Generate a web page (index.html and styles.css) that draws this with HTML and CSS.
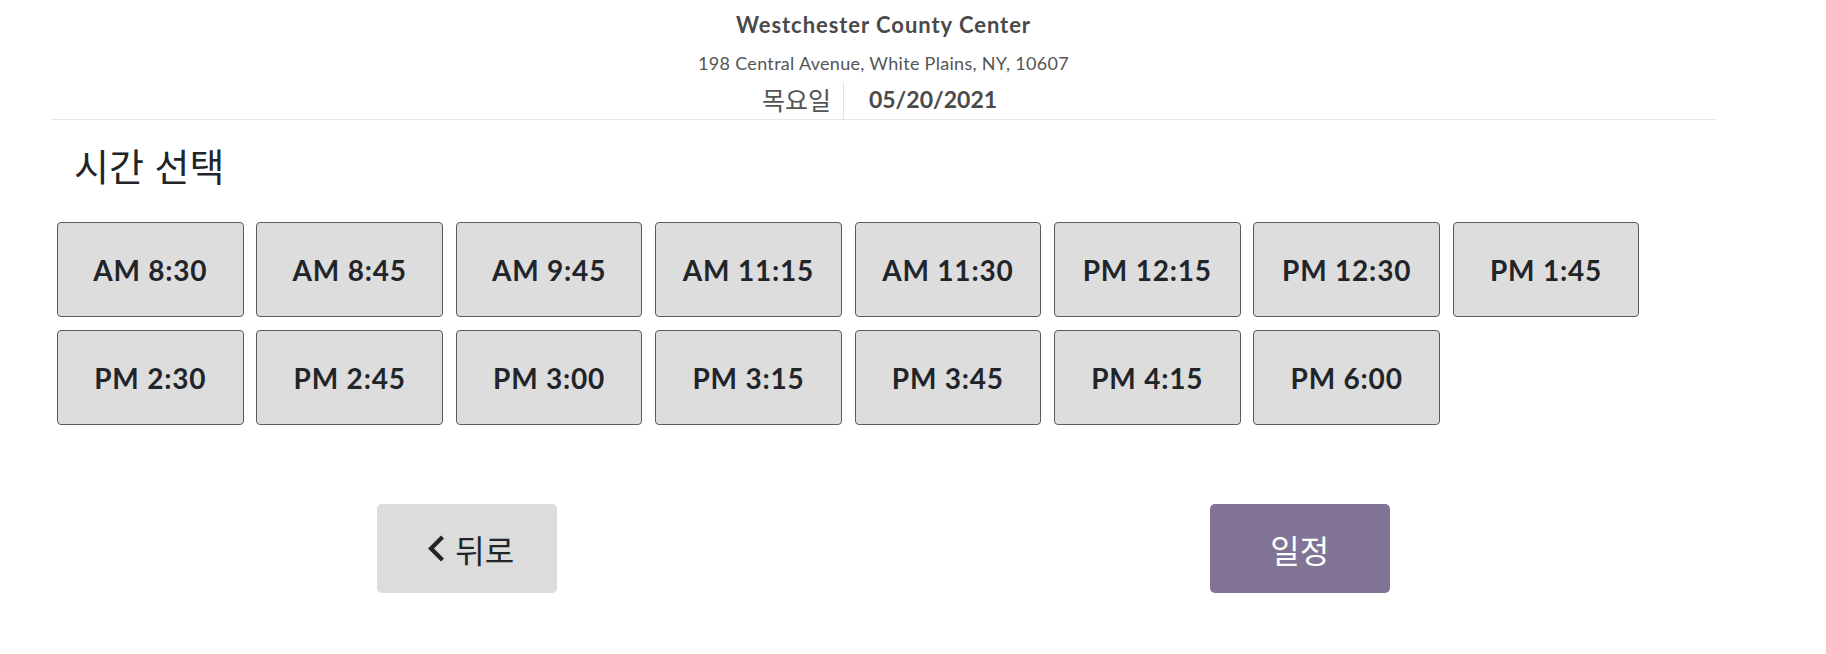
FILE: index.html
```html
<!DOCTYPE html>
<html lang="ko">
<head>
<meta charset="utf-8">
<title>시간 선택</title>
<link rel="stylesheet" href="styles.css">
</head>
<body>
<div class="page">
  <header class="header">
    <div class="venue">Westchester County Center</div>
    <div class="address">198 Central Avenue, White Plains, NY, 10607</div>
    <div class="date-row">
      <span class="weekday">목요일</span>
      <span class="date">05/20/2021</span>
    </div>
  </header>
  <h2 class="title">시간 선택</h2>
  <div class="slots">
    <button class="slot">AM 8:30</button>
    <button class="slot">AM 8:45</button>
    <button class="slot">AM 9:45</button>
    <button class="slot">AM 11:15</button>
    <button class="slot">AM 11:30</button>
    <button class="slot">PM 12:15</button>
    <button class="slot">PM 12:30</button>
    <button class="slot">PM 1:45</button>
    <button class="slot">PM 2:30</button>
    <button class="slot">PM 2:45</button>
    <button class="slot">PM 3:00</button>
    <button class="slot">PM 3:15</button>
    <button class="slot">PM 3:45</button>
    <button class="slot">PM 4:15</button>
    <button class="slot">PM 6:00</button>
  </div>
  <div class="nav">
    <div class="nav-col">
      <button class="nav-btn back">
        <svg class="chev" width="18" height="27" viewBox="0 0 18 27"><polyline points="15.5,2 4,13.5 15.5,25" fill="none" stroke="#212529" stroke-width="4.2"/></svg>
        <span>뒤로</span>
      </button>
    </div>
    <div class="nav-col">
      <button class="nav-btn next">일정</button>
    </div>
  </div>
</div>
</body>
</html>
```

FILE: styles.css
```css
* { box-sizing: border-box; }
body {
  margin: 0;
  background: #fff;
  font-family: "Lato", "Noto Sans CJK KR", sans-serif;
  color: #212529;
}
.page {
  margin-left: 51px;
  width: 1665px;
}
.header {
  text-align: center;
  padding-top: 12px;
  border-bottom: 1px solid #e6e6e6;
}
.venue {
  font-size: 22px;
  line-height: 26px;
  font-weight: 700;
  letter-spacing: 0.95px;
  color: #4a4a4a;
}
.address {
  margin-top: 14px;
  font-size: 18px;
  line-height: 22px;
  letter-spacing: 0.3px;
  color: #555;
}
.date-row {
  margin-top: 8px;
  display: flex;
  justify-content: center;
  height: 37px;
  padding-right: 8px;
}
.weekday {
  font-family: "Noto Sans CJK KR", sans-serif;
  font-size: 25px;
  line-height: 35px;
  color: #555;
  padding-right: 12px;
  border-right: 1px solid #e3e3e3;
}
.date {
  font-size: 23px;
  line-height: 35px;
  font-weight: 700;
  color: #4a4a4a;
  padding-left: 25px;
}
.title {
  margin: 23px 0 0 0;
  padding-left: 23px;
  font-family: "Noto Sans CJK KR", sans-serif;
  font-weight: 400;
  font-size: 38px;
  line-height: 44px;
  color: #212529;
}
.slots {
  margin: 35px 0 0 6px;
  display: grid;
  grid-template-columns: repeat(8, 186.6px);
  column-gap: 12.8px;
  row-gap: 13px;
}
.slot {
  height: 95px;
  border: 1px solid #5a5a5a;
  border-radius: 4px;
  background: #dddddd;
  font-family: "Lato", sans-serif;
  font-weight: 700;
  font-size: 28px;
  letter-spacing: 0.8px;
  color: #212529;
  padding: 0;
}
.nav {
  margin-top: 79px;
  display: flex;
}
.nav-col {
  flex: 1;
  display: flex;
  justify-content: center;
}
.nav-btn {
  width: 180px;
  height: 89px;
  border: none;
  border-radius: 5px;
  font-family: "Noto Sans CJK KR", sans-serif;
  font-size: 32px;
  display: flex;
  align-items: center;
  justify-content: center;
  gap: 10px;
  padding: 0;
}
.back {
  background: #dcdcdc;
  color: #212529;
  padding-left: 7px;
}
.next {
  background: #827494;
  color: #fff;
}
.chev { display: block; }
```
